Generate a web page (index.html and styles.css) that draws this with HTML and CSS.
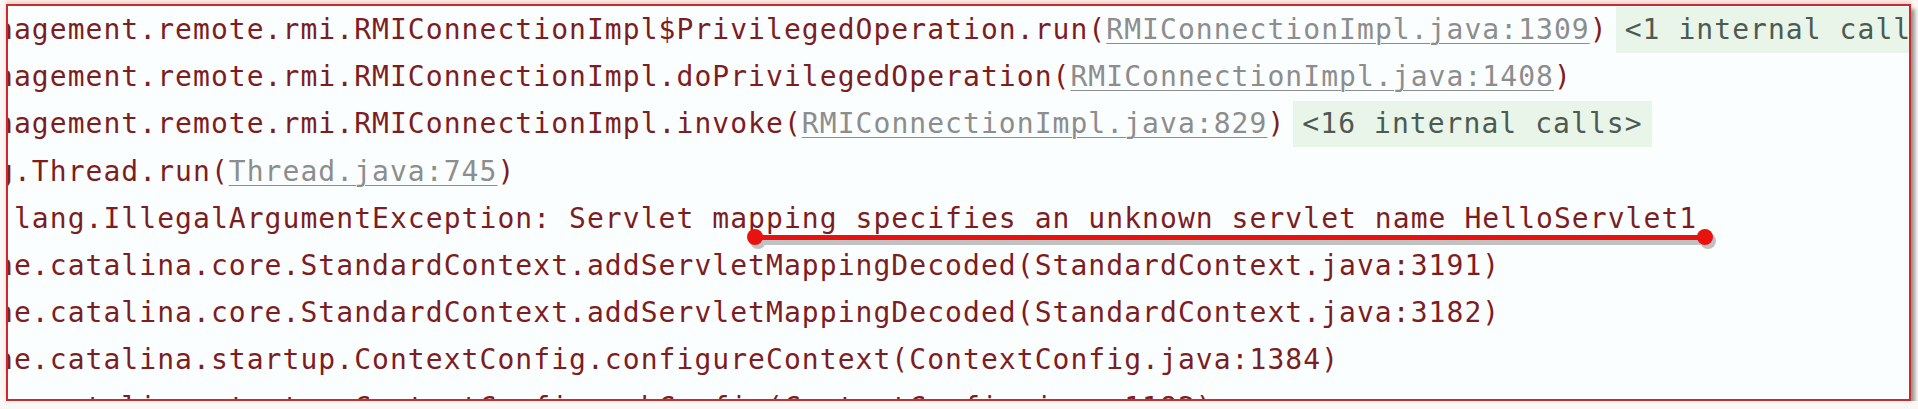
FILE: index.html
```html
<!DOCTYPE html>
<html lang="en">
<head>
  <meta charset="UTF-8" />
  <title>Stack trace</title>
  <link rel="stylesheet" href="styles.css">
</head>
<body>

<div id="frame">
  <div id="console">
    <div class="ln">nagement.remote.rmi.RMIConnectionImpl$PrivilegedOperation.run(<span class="src">RMIConnectionImpl.java:1309</span>)<span class="fold">&lt;1 internal calls&gt;</span></div>
    <div class="ln">nagement.remote.rmi.RMIConnectionImpl.doPrivilegedOperation(<span class="src">RMIConnectionImpl.java:1408</span>)</div>
    <div class="ln">nagement.remote.rmi.RMIConnectionImpl.invoke(<span class="src">RMIConnectionImpl.java:829</span>)<span class="fold">&lt;16 internal calls&gt;</span></div>
    <div class="ln">g.Thread.run(<span class="src">Thread.java:745</span>)</div>
    <div class="ln">.lang.IllegalArgumentException: Servlet mapping specifies an unknown servlet name HelloServlet1</div>
    <div class="ln">he.catalina.core.StandardContext.addServletMappingDecoded(StandardContext.java:3191)</div>
    <div class="ln">he.catalina.core.StandardContext.addServletMappingDecoded(StandardContext.java:3182)</div>
    <div class="ln">he.catalina.startup.ContextConfig.configureContext(ContextConfig.java:1384)</div>
    <div class="ln">he.catalina.startup.ContextConfig.webConfig(ContextConfig.java:1182)</div>
  </div>

  <!-- annotation drawn over the error line -->
  <svg id="mark" width="980" height="40" viewBox="0 0 980 40">
    <g fill="#9a9a9a" opacity="0.6">
      <rect x="14" y="20" width="950" height="5" rx="2"/>
      <circle cx="14" cy="21" r="8"/>
      <circle cx="964" cy="21" r="8"/>
    </g>
    <g fill="#e8120f">
      <rect x="11" y="15" width="950" height="5"/>
      <circle cx="11" cy="17" r="8"/>
      <circle cx="961" cy="17" r="8"/>
    </g>
  </svg>
</div>

</body>
</html>
```

FILE: styles.css
```css
body {
  margin: 0; padding: 0;
  background: #fbf7f5;
  overflow: hidden;
}
#frame {
  position: relative;
  margin: 4px 0 0 6px;
  width: 1901px;
  height: 393px;
  border: 2px solid #c92a2e;
  background: #fbfeff;
  box-shadow: 4px 5px 4px rgba(70,70,70,0.55), 0 -3px 3px rgba(230,170,150,0.45);
}
#console {
  height: 100%;
  overflow: hidden;
  font-family: 'DejaVu Sans Mono', monospace;
  font-size: 28px;
  letter-spacing: 1.05px;
  color: #7e1d1f;
}
.ln {
  margin-left: -12px;
  height: 47.2px;
  line-height: 47.2px;
  white-space: pre;
}
.src {
  color: #8d8d8d;
  text-decoration: underline;
  text-underline-offset: 4px;
  text-decoration-thickness: 1px;
}
.fold {
  margin-left: 8px;
  padding: 6px 9px 7px 9px;
  background: #eaf5ea;
  color: #4d5a52;
}
#mark {
  position: absolute;
  left: 736px;
  top: 214px;
}
```
